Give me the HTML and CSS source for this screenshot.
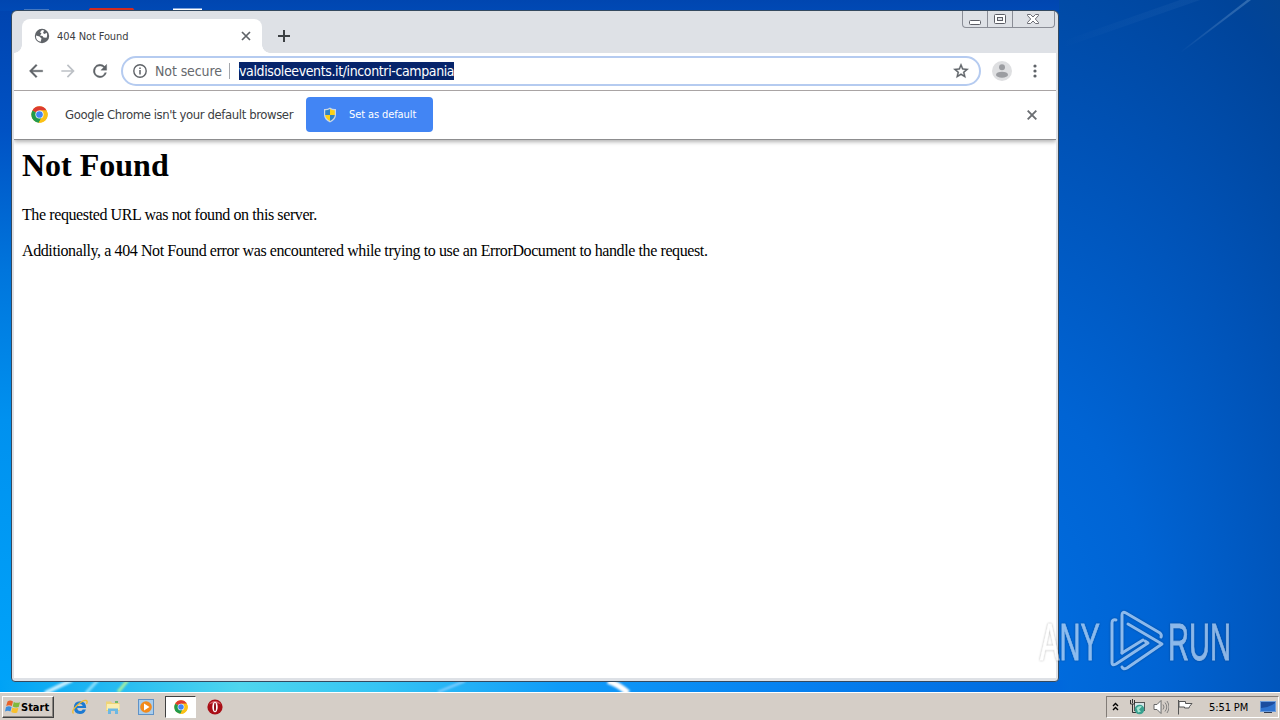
FILE: index.html
```html
<!DOCTYPE html>
<html lang="en">
<head>
    <meta charset="UTF-8">
    <meta name="viewport" content="width=device-width, initial-scale=1.0">
    <title>404 Not Found</title>
    <link rel="stylesheet" href="styles.css">
</head>
<body>
    <!-- shared icons -->
    <svg class="defs" width="0" height="0">
        <symbol id="chrome" viewBox="0 0 48 48">
            <circle cx="24" cy="24" r="23" fill="#fbc116"/>
            <path d="M24 24 4 12.5A23 23 0 0 1 44 12.5H24z" fill="#dd3b30"/>
            <path d="M4 12.5A23 23 0 0 0 22 47l10-18-8-5z" fill="#229a4c"/>
            <path d="M24 12.5h20A23 23 0 0 1 22 47l12-23z" fill="#fbc116"/>
            <circle cx="24" cy="24" r="11.5" fill="#fff"/>
            <circle cx="24" cy="24" r="9.5" fill="#4285f4"/>
        </symbol>
    </svg>

    <div class="desktop">
        <svg class="wallpaper" viewBox="0 0 1280 692" preserveAspectRatio="none">
            <defs>
                <filter id="soft"><feGaussianBlur stdDeviation="1"/></filter>
                <linearGradient id="ray" x1="0" x2="1">
                    <stop offset="0" stop-color="#fff" stop-opacity="0"/>
                    <stop offset="1" stop-color="#9cc8ee" stop-opacity=".3"/>
                </linearGradient>
            </defs>
            <path d="M1180 52 1247 0h4L1182 52z" fill="url(#ray)"/>
            <path d="M1060 42 1180 0h20L1062 48z" fill="url(#ray)" opacity=".2"/>
            <g filter="url(#soft)" fill="none">
                <path d="M45 693 72 680" stroke="#c6efff" stroke-width="4"/>
                <path d="M86 693 98 680" stroke="#8fe0fa" stroke-width="3"/>
                <path d="M118 692 128 680" stroke="#a9f0a0" stroke-width="3"/>
                <path d="M438 692 465 681" stroke="#8bd0ff" stroke-width="2"/>
                <path d="M608 681q10 3 20 12" stroke="#fff" stroke-width="6"/>
            </g>
            <!-- tops of the desktop icons behind the window -->
            <path d="M24 9.500h25V11H24z" fill="#8ba9cd"/>
            <path d="M90 8h43l2 3H88z" fill="#d32b20"/>
            <path d="M173 8.500h29V11h-29z" fill="#fff"/>
        </svg>

        <div class="window">
            <div class="tabstrip">
                <div class="tab">
                    <svg class="globe" viewBox="0 0 16 16">
                        <circle cx="8" cy="8" r="7.200" fill="#5f6368"/>
                        <path d="M8 2 6 4.200l1.500 1.200L6 7.500 8.500 8l1 1.500 3 .2c.8-1.500.9-3.400.1-4.900L10.500 6 9 5l1.200-2.600zM2 7.500l3.500 1 2 2-.8 3.300A6 6 0 0 1 2 7.500z" fill="#fff"/>
                    </svg>
                    <span class="tab-title">404 Not Found</span>
                    <svg class="tab-close" viewBox="0 0 10 10"><path d="M1 1l8 8M9 1 1 9" stroke="#5f6368" stroke-width="1.700"/></svg>
                </div>
                <svg class="new-tab" viewBox="0 0 12 12"><path d="M6 0v12M0 6h12" stroke="#3c4043" stroke-width="2"/></svg>
                <div class="caption-buttons">
                    <span class="cap"><svg width="14" height="14" viewBox="0 0 14 14"><rect x="1.500" y="8.500" width="11" height="4" rx="1" fill="#fff" stroke="#5c5e66"/></svg></span>
                    <span class="cap"><svg width="14" height="14" viewBox="0 0 14 14"><rect x="1.500" y="2.500" width="11" height="9" rx="1" fill="#fff" stroke="#5c5e66"/><rect x="4.500" y="5.500" width="5" height="3" fill="#dfe1e6" stroke="#5c5e66"/></svg></span>
                    <span class="cap cap-close"><svg width="14" height="14" viewBox="0 0 14 14"><path d="M1.500 2.500h3L7 5l2.500-2.500h3v1L9.300 7l3.200 3.500v1h-3L7 9l-2.500 2.500h-3v-1L4.700 7 1.500 3.500z" fill="#fff" stroke="#5c5e66" stroke-width=".9"/></svg></span>
                </div>
            </div>

            <div class="toolbar">
                <svg class="nav" viewBox="0 0 24 24"><path d="M20 11H7.830l5.590-5.590L12 4l-8 8 8 8 1.410-1.410L7.830 13H20z" fill="#5f6368" stroke="#5f6368" stroke-width=".4"/></svg>
                <svg class="nav" viewBox="0 0 24 24"><path d="M12 4l-1.410 1.410L16.170 11H4v2h12.170l-5.580 5.590L12 20l8-8z" fill="#bdc1c6"/></svg>
                <svg class="nav" viewBox="0 0 24 24"><path d="M17.650 6.350A8 8 0 1 0 19.730 14h-2.080A6 6 0 1 1 12 6c1.660 0 3.140.69 4.220 1.780L13 11h7V4z" fill="#5f6368" stroke="#5f6368" stroke-width=".4"/></svg>
                <div class="omnibox">
                    <svg class="info" viewBox="0 0 14 14"><circle cx="7" cy="7" r="6.200" fill="none" stroke="#5f6368" stroke-width="1.400"/><path d="M7 6v4.500M7 3.500V5" stroke="#5f6368" stroke-width="1.500"/></svg>
                    <span class="security">Not secure</span>
                    <span class="divider"></span>
                    <span class="url">valdisoleevents.it/incontri-campania</span>
                    <svg class="star" viewBox="0 0 24 24"><path d="M22 9.240l-7.190-.62L12 2 9.190 8.630 2 9.240l5.460 4.730L5.820 21 12 17.270 18.180 21l-1.630-7.030zM12 15.400l-3.760 2.270 1-4.280-3.320-2.880 4.380-.38L12 6.100l1.710 4.040 4.380.38-3.320 2.880 1 4.280z" fill="#5f6368" stroke="#5f6368" stroke-width=".5"/></svg>
                </div>
                <svg class="avatar" viewBox="0 0 20 20"><circle cx="10" cy="10" r="10" fill="#dedfe1"/><circle cx="10" cy="6.200" r="3" fill="#9b9da1"/><ellipse cx="10" cy="13.700" rx="6" ry="3" fill="#9b9da1"/></svg>
                <svg class="menu" viewBox="0 0 4 14"><g fill="#5f6368"><circle cx="2" cy="2" r="1.600"/><circle cx="2" cy="7" r="1.600"/><circle cx="2" cy="12" r="1.600"/></g></svg>
            </div>

            <div class="infobar">
                <svg class="infobar-logo"><use href="#chrome"/></svg>
                <span class="infobar-text">Google Chrome isn't your default browser</span>
                <div class="set-default">
                    <svg class="shield" viewBox="0 0 14 16">
                        <path d="M7 .5q3 2 6 1.500v6q0 4.500-6 7.500-6-3-6-7.500V2q3 .5 6-1.500z" fill="#c9d6e4"/>
                        <path d="M7 2Q4.500 3.500 2.200 3.300V8H7z" fill="#2f82c9"/>
                        <path d="M7 2q2.500 1.500 4.800 1.300V8H7z" fill="#fcd116"/>
                        <path d="M2.200 8H7v6Q2.500 11.500 2.200 8z" fill="#fcd116"/>
                        <path d="M11.800 8H7v6q4.500-2.500 4.800-6z" fill="#2f82c9"/>
                    </svg>
                    <span class="set-default-text">Set as default</span>
                </div>
                <svg class="infobar-close" viewBox="0 0 10 10"><path d="M.7.700l8.600 8.600M9.300.700.7 9.300" stroke="#6b6e72" stroke-width="1.900"/></svg>
            </div>

            <div class="page">
                <h1>Not Found</h1>
                <p class="line-one">The requested URL was not found on this server.</p>
                <p class="line-two">Additionally, a 404 Not Found error was encountered while trying to use an ErrorDocument to handle the request.</p>
            </div>
        </div>

        <div class="watermark">
            <span class="mark-any">ANY</span>
            <svg class="mark-logo" viewBox="0 0 56 62">
                <g fill="none" stroke="#fff" stroke-width="3" stroke-linecap="round" stroke-linejoin="round">
                    <path d="M7 10Q3 9 3 13v40q0 3 4 1l32-21-3-2"/>
                    <path d="M13 43V5q0-4 4-2l34 20q2 2 1 4"/>
                    <path d="M13 43l21-13M19 14l34 20L18 58q-4 2-5-1"/>
                </g>
            </svg>
            <span class="mark-run">RUN</span>
        </div>
    </div>

    <div class="taskbar">
        <div class="start">
            <svg class="flag" viewBox="0 0 16 16">
                <path d="M2.500 2.500Q5 .7 8 2.500L6.800 7Q4 5.600 1.200 7z" fill="#e8622a"/>
                <path d="M8.800 3q3 1.600 6.200.2L13.700 8q-3 1.200-6-.5z" fill="#7fb93c"/>
                <path d="M1 8q3-1.500 5.600 0L5.400 12.500Q3 11 0 12.500z" fill="#3b8ede"/>
                <path d="M7.400 8.500q3 1.600 6 .2L12.200 13.500q-3 1.300-6-.4z" fill="#f8c02c"/>
            </svg>
            <span>Start</span>
        </div>
        <div class="quick-launch">
            <svg class="task-icon" viewBox="0 0 16 16">
                <path d="M14.200 9H5.200q.3 3 3 3 1.800 0 2.500-1.500h3.200Q12.500 15 8 15 1.800 14.500 1.800 8.500 2.200 2.200 8 2.200q6.200.3 6.200 6.800zM5.300 7h5.400Q10.300 4.900 8 4.900T5.300 7z" fill="#1c7ad2"/>
                <path d="M1.500 14.500Q-1 12 5 6.500t9-5Q16 2 14.500 5" fill="none" stroke="#f0bb2f" stroke-width="1.300"/>
            </svg>
            <svg class="task-icon" viewBox="0 0 16 16">
                <path d="M1 2.500h5l1 1.500h7.500v8H1z" fill="#efd477"/>
                <path d="M2 5h12.500v6H1.500z" fill="#faeeb0"/>
                <path d="M3 15V9.500h10V15h-3v-3H6v3z" fill="#6db8e3"/>
                <path d="M10 2h3v2h-3z" fill="#6fb96b"/>
            </svg>
            <svg class="task-icon" viewBox="0 0 16 16">
                <rect x=".5" y=".5" width="15" height="15" fill="#a9cdec" stroke="#5f92c7"/>
                <circle cx="8" cy="8" r="5.800" fill="#f28a1c"/>
                <path d="M6 4.500 11.500 8 6 11.500z" fill="#fff"/>
            </svg>
            <div class="task-active"><svg class="task-chrome"><use href="#chrome"/></svg></div>
            <svg class="task-icon" viewBox="0 0 16 16">
                <circle cx="8" cy="8" r="7.600" fill="#a90e16"/>
                <path d="M2 5.500a7 7 0 0 1 12 0Q8 2 2 5.500z" fill="#d9636a"/>
                <ellipse cx="8" cy="8" rx="2.700" ry="5.300" fill="#fff"/>
                <ellipse cx="8" cy="8" rx="1" ry="4.300" fill="#8d0d14"/>
            </svg>
        </div>
        <div class="tray">
            <svg class="chevrons" viewBox="0 0 7 9"><path d="M1 4l2.500-2.500L6 4M1 8l2.500-2.500L6 8" fill="none" stroke="#000" stroke-width="1.400"/></svg>
            <svg class="network" viewBox="0 0 16 16">
                <rect x="5.500" y="3.500" width="10" height="8" fill="#d6e6e8" stroke="#555"/>
                <path d="M1.500 1v4h4V1M3.500 0v4M3.500 5v8.500H7" fill="none" stroke="#333"/>
                <circle cx="10.500" cy="10.500" r="4.800" fill="#39a08f"/>
                <path d="M7.500 9q3-3 5.500-1.500L10 10.500l2 2-3 1z" fill="#a6e3cf"/>
            </svg>
            <svg class="volume" viewBox="0 0 16 16">
                <path d="M1 5.500h3L8 1.500v13L4 10.500H1z" fill="#fff" stroke="#686868"/>
                <path d="M10 5.500q2 2.500 0 5M12 3.500q3.500 4.500 0 9M14 2q4 6 0 12" fill="none" stroke="#777" stroke-width=".9"/>
            </svg>
            <svg class="action" viewBox="0 0 16 16"><path d="M1.500 1v14.500M2 2.500h6.500v2H15L12.500 7.500l-.5 1.500H7.500V8H2z" fill="#fff" stroke="#555"/></svg>
            <span class="clock">5:51 PM</span>
            <svg class="show-desktop" viewBox="0 0 16 14">
                <rect x=".5" y="1.500" width="15" height="10" fill="#1c4d9f" stroke="#6d9cda"/>
                <path d="M1 8q7 0 14-5v8H1z" fill="#2f73cf"/>
                <path d="M4 12.500h8" stroke="#303a50"/>
            </svg>
        </div>
    </div>
</body>
</html>
```

FILE: styles.css
```css
* {
    box-sizing: border-box;
}

body {
    margin: 0;
    width: 1280px;
    height: 720px;
    display: flex;
    flex-direction: column;
    overflow: hidden;
    font-family: "DejaVu Sans Condensed", "DejaVu Sans", sans-serif;
}

svg {
    display: block;
    flex: none;
}

span {
    white-space: nowrap;
}

.defs {
    position: absolute;
}

/* desktop */
.desktop {
    position: relative;
    flex: 1;
    background:
        linear-gradient(90deg, #00a2f5 0, #4fd6ee 240px, #35c4f4 380px, #109bf8 560px, #0680f0 800px, #0068dc 1060px, rgba(0, 96, 210, 0) 1070px) 0 100% / 100% 12px no-repeat,
        linear-gradient(180deg, #0046b0 0, #0049b5 100%) 0 0 / 1059px 11px no-repeat,
        linear-gradient(180deg, #0043ae 0, #0052c4 130px, #0075dc 270px, #0091ef 420px, #00a4fa 692px) 0 0 / 12px 100% no-repeat,
        radial-gradient(ellipse 520px 900px at 1000px 660px, #006fe2 0, #0064d4 30%, #0052b6 60%, #00449a 85%, #084486 100%);
}

.wallpaper {
    position: absolute;
    left: 0;
    top: 0;
    width: 1280px;
    height: 692px;
}

/* browser window */
.window {
    position: absolute;
    left: 11px;
    top: 10px;
    width: 1048px;
    height: 672px;
    padding: 1px 2px 3px;
    display: flex;
    flex-direction: column;
    background: #dee1e6;
    border: 1px solid #34495f;
    border-radius: 6px 6px 4px 4px;
}

.tabstrip {
    display: flex;
    align-items: flex-start;
    height: 41px;
    padding-left: 8px;
}

.tab {
    position: relative;
    display: flex;
    align-items: center;
    width: 240px;
    height: 34px;
    margin-top: 7px;
    padding: 0 11px 0 12px;
    background: #fff;
    border-radius: 8px 8px 0 0;
}

/* curved feet of the tab */
.tab::before,
.tab::after {
    content: "";
    position: absolute;
    bottom: 0;
    width: 8px;
    height: 8px;
}

.tab::before {
    left: -8px;
    background: radial-gradient(circle at 0 0, transparent 7.5px, #fff 8px);
}

.tab::after {
    right: -8px;
    background: radial-gradient(circle at 100% 0, transparent 7.5px, #fff 8px);
}

.globe {
    width: 16px;
    height: 16px;
}

.tab-title {
    flex: 1;
    margin-left: 7px;
    font-size: 11px;
    letter-spacing: -0.1px;
    color: #3c4043;
}

.tab-close {
    width: 10px;
    height: 10px;
}

.new-tab {
    width: 12px;
    height: 12px;
    margin: 18px 0 0 16px;
}

.caption-buttons {
    display: flex;
    height: 17px;
    margin: -1px 1px 0 auto;
    border: 1px solid #8a8d96;
    border-top: 0;
    border-radius: 0 0 4px 4px;
}

.cap {
    width: 25px;
    padding: 1px 0 0 5px;
    border-right: 1px solid #8a8d96;
}

.cap-close {
    width: 41px;
    padding-left: 13px;
    border-right: 0;
}

.toolbar {
    display: flex;
    align-items: center;
    height: 38px;
    padding: 0 19px 1px 12px;
    background: #fff;
    border-bottom: 1px solid #a9a4a4;
}

.nav {
    width: 20px;
    height: 20px;
    margin-right: 12px;
}

.omnibox {
    display: flex;
    align-items: center;
    width: 860px;
    height: 30px;
    margin-left: -1px;
    padding: 0 9px 0 10px;
    border: 2px solid #b5cbf0;
    border-radius: 15px;
    font-size: 14px;
}

.info {
    width: 14px;
    height: 14px;
}

.security {
    width: 67px;
    margin-left: 8px;
    letter-spacing: -0.1px;
    color: #66696d;
}

.divider {
    width: 1px;
    height: 16px;
    margin: 0 9px 0 7px;
    background: #a4a7ad;
}

.url {
    width: 215px;
    height: 18px;
    line-height: 18px;
    letter-spacing: -0.38px;
    background: #06246b;
    color: #fff;
}

.star {
    width: 18px;
    height: 18px;
    margin-left: auto;
}

.avatar {
    width: 20px;
    height: 20px;
    margin-left: 11px;
}

.menu {
    width: 4px;
    height: 14px;
    margin-left: auto;
}

/* default browser prompt */
.infobar {
    position: relative;
    display: flex;
    align-items: center;
    height: 49px;
    padding: 0 19px 1px 17px;
    background: #fff;
    border-bottom: 1px solid #8d8d8f;
    box-shadow: 0 2px 4px rgba(0, 0, 0, 0.3);
    clip-path: inset(0 0 -8px 0);
}

.infobar-logo {
    width: 17px;
    height: 17px;
}

.infobar-text {
    width: 229px;
    margin-left: 17px;
    font-size: 13px;
    letter-spacing: -0.41px;
    color: #3c4043;
}

.set-default {
    display: flex;
    align-items: center;
    width: 127px;
    height: 35px;
    margin-left: 12px;
    padding-left: 17px;
    background: #4285f4;
    border-radius: 4px;
}

.shield {
    width: 14px;
    height: 16px;
}

.set-default-text {
    margin-left: 12px;
    font-size: 11px;
    letter-spacing: -0.1px;
    color: #fff;
}

.infobar-close {
    width: 10px;
    height: 10px;
    margin-left: auto;
}

/* document */
.page {
    flex: 1;
    padding: 7px 8px;
    background: #fff;
    color: #000;
    font-family: "Liberation Serif", "Times New Roman", serif;
}

.page h1 {
    margin: 0;
    font-size: 32px;
    line-height: 36px;
}

.page p {
    margin: 0;
    font-size: 16px;
    line-height: 18px;
    letter-spacing: -0.4px;
    white-space: nowrap;
}

.page .line-one {
    margin-top: 23px;
}

.page .line-two {
    margin-top: 18px;
}

/* watermark */
.watermark {
    position: absolute;
    left: 1040px;
    top: 610px;
    display: flex;
    align-items: center;
    width: 194px;
    height: 62px;
    font-family: "Liberation Sans", Arial, sans-serif;
    font-size: 51px;
    line-height: 62px;
    color: #fff;
    opacity: 0.55;
    filter: drop-shadow(0 0 1px rgba(0, 0, 0, 0.5));
}

.mark-any,
.mark-run {
    width: 69px;
    -webkit-text-stroke: 0.8px #fff;
    transform: translateY(2px) scaleX(0.57);
    transform-origin: 0 50%;
}

.mark-run {
    width: 60px;
    margin-left: 3px;
}

.mark-logo {
    width: 56px;
    height: 62px;
}

/* taskbar */
.taskbar {
    display: flex;
    align-items: center;
    height: 28px;
    padding: 0 1px 0 2px;
    background: #d5cec7;
    border-top: 1px solid #fff;
}

.start {
    display: flex;
    align-items: center;
    width: 52px;
    height: 22px;
    margin-top: 1px;
    padding-left: 2px;
    border: 1px solid;
    border-color: #fff #404040 #404040 #fff;
    box-shadow: inset -1px -1px #8a8580;
    font-size: 11px;
    font-weight: bold;
}

.flag {
    width: 16px;
    height: 16px;
}

.quick-launch {
    display: flex;
    align-items: center;
    margin: 1px 0 0 18px;
}

.task-icon {
    width: 16px;
    height: 16px;
    margin-right: 17px;
}

.task-active {
    display: flex;
    align-items: center;
    justify-content: center;
    width: 31px;
    height: 22px;
    margin: 0 11px 0 -6px;
    background: #fff;
    border: 1px solid;
    border-color: #404040 #fff #fff #404040;
}

.task-chrome {
    width: 14px;
    height: 14px;
}

.tray {
    display: flex;
    align-items: center;
    width: 173px;
    height: 22px;
    margin: 1px 0 0 auto;
    padding-left: 5px;
    border: 1px solid;
    border-color: #827c77 #fff #fff #827c77;
}

.chevrons {
    width: 7px;
    height: 9px;
    margin-top: -2px;
}

.network {
    width: 16px;
    height: 16px;
    margin-left: 10px;
}

.volume {
    width: 16px;
    height: 16px;
    margin-left: 8px;
}

.action {
    width: 16px;
    height: 16px;
    margin-left: 8px;
}

.clock {
    width: 41px;
    margin-left: 16px;
    font-size: 11px;
    letter-spacing: -0.1px;
}

.show-desktop {
    width: 16px;
    height: 14px;
    margin-left: 10px;
}
```
